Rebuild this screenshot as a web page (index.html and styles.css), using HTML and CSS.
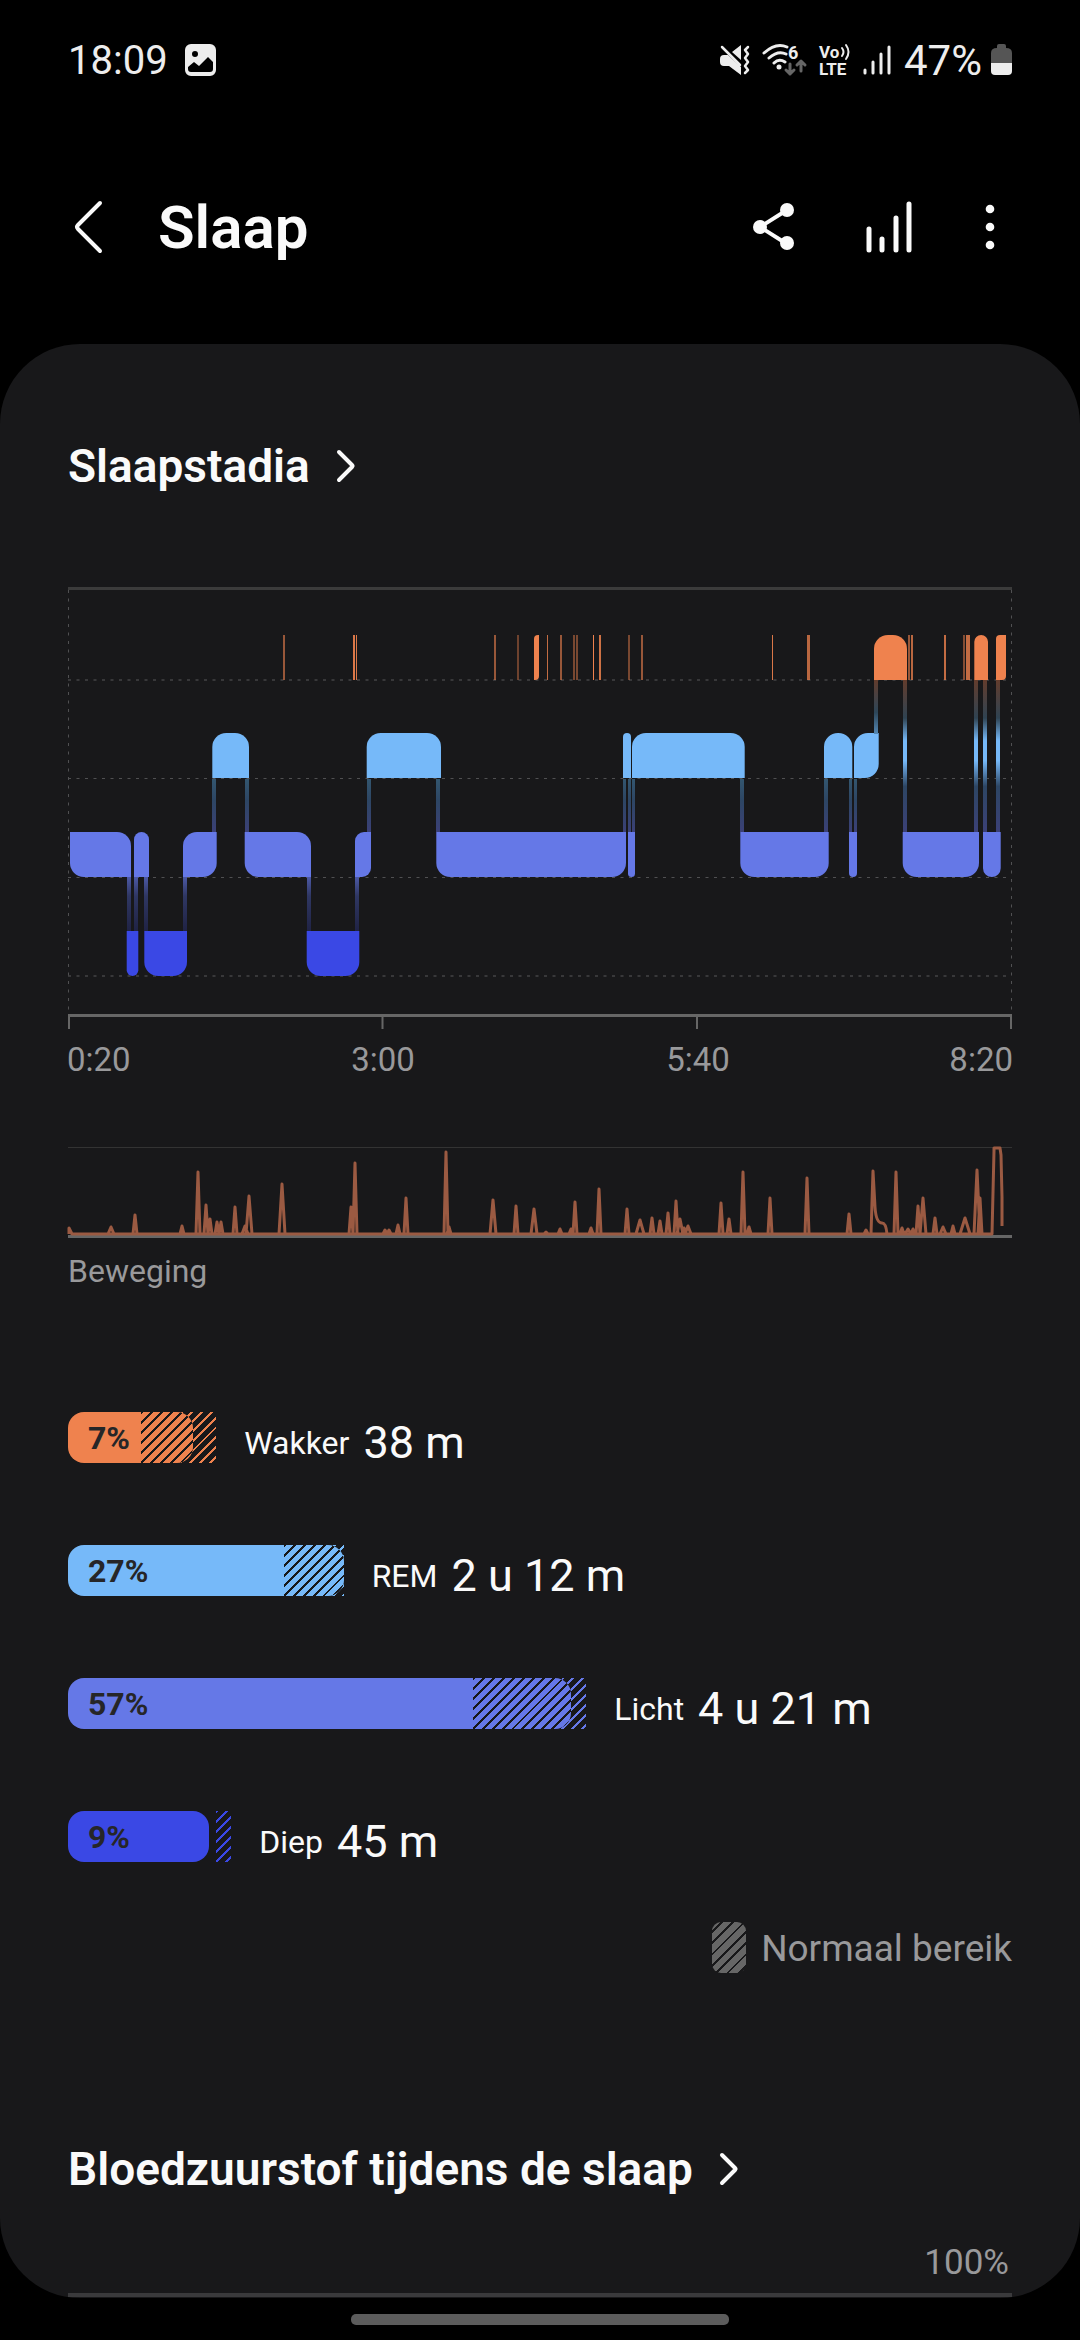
FILE: index.html
```html
<!DOCTYPE html>
<html lang="nl">
<head>
    <meta charset="UTF-8">
    <meta name="viewport" content="width=device-width, initial-scale=1.0">
    <title>Slaap</title>
    <link rel="stylesheet" href="styles.css">
</head>
<body>
    <div class="status-bar">
        <span class="status-time">18:09</span>
        <svg class="status-icon" width="31" height="32" viewBox="0 0 31 32">
            <path fill-rule="evenodd" d="M6 0h19a6 6 0 0 1 6 6v20a6 6 0 0 1-6 6H6a6 6 0 0 1-6-6V6a6 6 0 0 1 6-6zM3 23v2q0 3 3 3h19q3 0 3-3v-7l-5-5-9 9-5-4zM10 7a3 3 0 1 0 0 6 3 3 0 0 0 0-6z"/>
        </svg>
        <div class="status-right">
            <svg class="status-icon" width="30" height="30" viewBox="0 0 30 30">
                <path d="M0 14q0-4 4-4h4l13 12v8L9 21H4q-4 0-4-4zM12 7l9-7v15z"/>
                <path class="line" stroke-width="2.5" d="M2 2l18 18"/>
                <path class="line" stroke-width="2.5" d="M28 2l-3 3 3 4-3 4 3 4-3 4 3 4-3 3"/>
            </svg>
            <svg class="status-icon" width="45" height="34" viewBox="0 0 45 34">
                <path class="line" stroke-width="3" d="M2 10Q14-1 25 4M7 15q9-8 17-4M12 20q5-5 11-1"/>
                <circle cx="17" cy="24" r="2.5"/>
                <text class="wifi-text" x="26" y="16">6</text>
                <path class="line dim" stroke-width="3" d="M28 21v10M24 27l4 4 4-4M39 28V18M35 22l4-4 4 4"/>
            </svg>
            <svg class="status-icon" width="32" height="36" viewBox="0 0 32 36">
                <text class="lte-text" x="0" y="16">Vo</text>
                <path class="line" stroke-width="2" d="M23 6q3 4 0 8M27 3q5 7 0 14"/>
                <text class="lte-text" x="0" y="33">LTE</text>
            </svg>
            <svg class="status-icon signal" width="28" height="30" viewBox="0 0 28 30">
                <path class="line" stroke-width="3" d="M2 25v3M10 17v11M18 9v19M26 2v26"/>
            </svg>
            <span class="status-battery">47%</span>
            <svg class="status-icon" width="21" height="32" viewBox="0 0 21 32">
                <path class="dim-fill" d="M6 2q0-2 2-2h5q2 0 2 2v2q6 0 6 5v11H0V9q0-5 6-5z"/>
                <path d="M0 19h21v8q0 4-4 4H4q-4 0-4-4z"/>
            </svg>
        </div>
    </div>

    <header class="header">
        <button class="icon-btn back" aria-label="Terug">
            <svg width="34" height="54" viewBox="0 0 34 54"><path class="line" stroke-width="4" d="M32 3L10 25q-2 2 0 4l22 22"/></svg>
        </button>
        <h1 class="title">Slaap</h1>
        <button class="icon-btn" aria-label="Delen">
            <svg width="52" height="54" viewBox="0 0 52 54">
                <path class="line" stroke-width="4" d="M39 10L12 27l27 17"/>
                <circle cx="39" cy="10" r="7"/><circle cx="12" cy="27" r="7"/><circle cx="39" cy="43" r="7"/>
            </svg>
        </button>
        <button class="icon-btn" aria-label="Trends">
            <svg width="52" height="54" viewBox="0 0 52 54"><path class="line" stroke-width="5" d="M5 29v21M18 39v11M32 18v32M45 4v46"/></svg>
        </button>
        <button class="icon-btn" aria-label="Meer opties">
            <svg width="20" height="54" viewBox="0 0 20 54"><circle cx="10" cy="9" r="4.3"/><circle cx="10" cy="27" r="4.3"/><circle cx="10" cy="45" r="4.3"/></svg>
        </button>
    </header>

    <main class="card">
        <h2 class="section-title">
            <a href="#">Slaapstadia
                <svg width="20" height="34" viewBox="0 0 20 34"><path class="line" stroke-width="4" d="M3 3l13 13q1 1 0 2L3 31"/></svg>
            </a>
        </h2>

        <svg class="stage-chart" id="stageChart" viewBox="0 0 944 493">
            <defs>
                <linearGradient id="lightDeep" x1="0" y1="0" x2="0" y2="1">
                    <stop offset="0" stop-color="#4c59a6"/><stop offset="0.35" stop-color="#2f3763"/><stop offset="1" stop-color="#202345"/>
                </linearGradient>
                <linearGradient id="remLight" x1="0" y1="0" x2="0" y2="1">
                    <stop offset="0" stop-color="#33566f"/><stop offset="0.4" stop-color="#2d4664"/><stop offset="1" stop-color="#3b4077"/>
                </linearGradient>
                <linearGradient id="wakeRem" x1="0" y1="0" x2="0" y2="1">
                    <stop offset="0" stop-color="#633c2c"/><stop offset="0.6" stop-color="#2d4659"/><stop offset="1" stop-color="#5488b5"/>
                </linearGradient>
                <linearGradient id="wakeLight" x1="0" y1="0" x2="0" y2="1">
                    <stop offset="0" stop-color="#633c2c"/><stop offset="0.25" stop-color="#2f4352"/><stop offset="0.4" stop-color="#76b9f9"/>
                    <stop offset="0.53" stop-color="#76b9f9"/><stop offset="0.7" stop-color="#2d4664"/><stop offset="1" stop-color="#3b4077"/>
                </linearGradient>
            </defs>
            <rect class="chart-top" x="0" y="0" width="944" height="3"/>
            <path class="grid-row" d="M0 93h940M0 389h940"/>
            <path class="grid-line" d="M0 191.500h940M0 290.500h940M.5 3v424M943.500 3v424"/>
            <g id="stages"></g>
            <rect class="chart-axis" x="0" y="427" width="944" height="3"/>
            <path class="chart-tick" d="M1 430v12M314.500 430v12M629 430v12M943 430v12"/>
            <text class="chart-label" x="-1" y="484">0:20</text>
            <text class="chart-label middle" x="315" y="484">3:00</text>
            <text class="chart-label middle" x="630" y="484">5:40</text>
            <text class="chart-label end" x="945" y="484">8:20</text>
        </svg>

        <svg class="move-chart" viewBox="0 0 944 92">
            <rect class="move-top" x="0" y="0" width="944" height="1"/>
            <rect class="chart-axis" x="0" y="88" width="944" height="3"/>
            <path class="move-line" id="moveLine"/>
        </svg>
        <p class="move-label">Beweging</p>

        <ul class="stage-list">
            <li class="stage wake">
                <div class="track" style="width: 15.7%">
                    <div class="range" style="left: 49.3%"></div>
                    <div class="fill" style="width: 84.5%">7%<div class="hatch" style="left: 58.4%"></div></div>
                </div>
                <span class="stage-name">Wakker</span>
                <span class="stage-time">38 m</span>
            </li>
            <li class="stage rem">
                <div class="track" style="width: 29.2%">
                    <div class="range" style="left: 78.3%"></div>
                    <div class="fill" style="width: 100%">27%<div class="hatch" style="left: 78.3%"></div></div>
                </div>
                <span class="stage-name">REM</span>
                <span class="stage-time">2 u 12 m</span>
            </li>
            <li class="stage light">
                <div class="track" style="width: 54.9%">
                    <div class="range" style="left: 78.2%"></div>
                    <div class="fill" style="width: 97.1%">57%<div class="hatch" style="left: 80.5%"></div></div>
                </div>
                <span class="stage-name">Licht</span>
                <span class="stage-time">4 u 21 m</span>
            </li>
            <li class="stage deep">
                <div class="track" style="width: 17.3%">
                    <div class="range" style="left: 90.8%"></div>
                    <div class="fill" style="width: 86.5%">9%</div>
                </div>
                <span class="stage-name">Diep</span>
                <span class="stage-time">45 m</span>
            </li>
        </ul>

        <div class="legend">
            <span class="legend-swatch"></span>
            <span class="legend-text">Normaal bereik</span>
        </div>

        <h2 class="section-title oxygen-title">
            <a href="#">Bloedzuurstof tijdens de slaap
                <svg width="20" height="34" viewBox="0 0 20 34"><path class="line" stroke-width="4" d="M3 3l13 13q1 1 0 2L3 31"/></svg>
            </a>
        </h2>
        <div class="oxygen-top">100%</div>
    </main>
    <div class="nav-handle"></div>

    <script src="chart.js"></script>
</body>
</html>
```
FILE: chart.js
```js
const colors = { wake: '#ef824e', rem: '#76b9f9', light: '#6578e7', deep: '#3a48e5' };
const rows = { wake: 48, rem: 146, light: 245, deep: 344 };

// connecting lines: x, y, width, height, gradient
const links = [];
[59, 66, 76, 115, 239, 287].forEach(x => links.push([x, 290, 4, 54, 'lightDeep']));
[144, 177, 299, 368, 672, 756].forEach(x => links.push([x, 192, 4, 53, 'remLight']));
[555, 560, 564, 781, 786].forEach(x => links.push([x, 192, 3, 53, 'remLight']));
links.push([806, 93, 4, 54, 'wakeRem']);
[835, 906, 915, 928].forEach(x => links.push([x, 93, 4, 152, 'wakeLight']));

// stage, start, end, rounded corners (tl tr br bl)
const stages = [
    ['light', 2, 63, '0101'], ['light', 66, 81, '1100'], ['deep', 58.7, 70.3, '0011'],
    ['deep', 76.3, 119, '0011'], ['light', 115, 148.7, '1010'], ['rem', 144.3, 181, '1100'],
    ['light', 176.7, 243, '0101'], ['deep', 238.7, 291.3, '0011'], ['light', 287, 303, '1010'],
    ['rem', 298.7, 373, '1100'], ['light', 368.3, 558, '0011'], ['rem', 555, 563, '1100'],
    ['light', 560, 567, '0011'], ['rem', 564, 676.7, '1100'], ['light', 672.3, 760.7, '0011'],
    ['rem', 756, 784.3, '1100'], ['light', 781, 789, '0011'], ['rem', 786, 810.7, '1010'],
    ['wake', 806, 839, '1100'], ['light', 834.7, 911, '0011'], ['wake', 906.3, 920, '1100'],
    ['light', 915, 932.7, '0011'], ['wake', 928, 938, '1010'], ['wake', 466, 471, '1010']
];

// short wake moments: x, width, opacity
const wakes = [
    [215, 2, 0.6], [285, 2, 0.9], [288, 1, 0.9], [426, 2, 0.6], [449, 2, 0.4], [479, 1, 0.8],
    [492, 2, 0.6], [505, 2, 0.45], [508, 2, 0.45], [525, 1, 1], [531, 2, 0.85], [560, 2, 0.45],
    [573, 2, 0.6], [704, 1, 0.9], [739, 3, 0.75], [840, 2, 0.6], [843, 2, 0.75], [876, 2, 0.8],
    [895, 2, 0.5], [898, 4, 0.8]
];

function barPath(x1, y, x2, corners) {
    const h = 45;
    const both = corners === '1100' || corners === '0011';
    const r = Math.min(14, both ? (x2 - x1) / 2 : Math.max(x2 - x1 - 7, 4));
    const [a, b, c, d] = corners.split('').map(v => v === '1' ? r : 0);
    return `M${x1 + a} ${y}H${x2 - b}a${b} ${b} 0 0 1 ${b} ${b}V${y + h - c}a${c} ${c} 0 0 1 ${-c} ${c}H${x1 + d}a${d} ${d} 0 0 1 ${-d} ${-d}V${y + a}a${a} ${a} 0 0 1 ${a} ${-a}z`;
}

let html = '';
stages.forEach(([stage, x1, x2, corners]) => {
    html += `<path fill="${colors[stage]}" d="${barPath(x1, rows[stage], x2, corners)}"/>`;
});
wakes.forEach(([x, w, o]) => {
    html += `<rect fill="${colors.wake}" opacity="${o}" x="${x}" y="48" width="${w}" height="45"/>`;
});
links.forEach(([x, y, w, h, id]) => {
    html += `<rect fill="url(#${id})" x="${x}" y="${y}" width="${w}" height="${h}"/>`;
});
document.getElementById('stages').innerHTML = html;

// movement peaks: x, top, half width
const peaks = [
    [43, 79, 3], [67, 67, 2], [114, 78, 2], [130, 24, 2], [138, 57, 2], [142, 71, 2], [149, 74, 2], [153, 74, 2],
    [163, 86, 2], [167, 59, 2], [177, 78, 3], [181, 48, 3], [214, 36, 3], [238, 86, 2], [277, 86, 2], [283, 59, 2],
    [287, 15, 2], [311, 86, 2], [317, 82, 2], [321, 82, 2], [330, 77, 2], [338, 50, 2], [378, 4, 2], [381, 79, 2],
    [425, 52, 3], [434, 86, 2], [448, 58, 2], [466, 61, 3], [478, 84, 2], [492, 81, 2], [503, 81, 2], [507, 54, 2],
    [523, 80, 2], [531, 41, 2], [559, 61, 2], [572, 72, 4], [584, 70, 2], [592, 73, 2], [600, 65, 2],
    [608, 53, 2], [612, 71, 3], [616, 80, 2], [620, 78, 3], [653, 55, 2], [661, 71, 2], [675, 24, 2], [681, 79, 2],
    [702, 50, 2], [739, 30, 2], [781, 66, 2], [798, 82, 2], [828, 24, 2], [834, 80, 2], [840, 81, 3], [845, 81, 2],
    [850, 58, 2], [855, 50, 3], [867, 70, 2], [875, 79, 3], [885, 78, 2], [897, 70, 5], [909, 22, 3], [912, 50, 2]
];
let d = 'M1 87V81L4 87H911';
peaks.forEach(([x, top, w]) => {
    d += `M${x - w} 87L${x} ${top + 1}L${x + w} 87`;
});
d += 'M803 87L805 24L807 60Q808 76 814 76Q818 76 819 87';
d += 'M911 87H924L926 4V1H932L933 8L934 50V79';
document.getElementById('moveLine').setAttribute('d', d);
```
FILE: styles.css
```css
* {
    box-sizing: border-box;
}
body {
    margin: 0;
    background: #000;
    color: #fafafa;
    font-family: Roboto, "Liberation Sans", sans-serif;
}
svg {
    display: block;
    fill: currentColor;
    overflow: visible;
}
.line {
    fill: none;
    stroke: currentColor;
    stroke-linecap: round;
    stroke-linejoin: round;
}
.status-bar {
    display: flex;
    align-items: center;
    height: 120px;
    padding: 0 68px;
    color: #ededed;
    font-size: 40px;
}
.status-time {
    margin-right: 17px;
}
.status-right {
    display: flex;
    align-items: center;
    gap: 12px;
    margin-left: auto;
}
.status-battery {
    font-size: 42px;
    margin: 0 -3px 0 1px;
}
.dim {
    color: #666;
}
.dim-fill {
    fill: #555;
}
.wifi-text {
    font-size: 18px;
    font-weight: bold;
}
.lte-text {
    font-size: 17px;
    font-weight: bold;
}
.header {
    display: flex;
    align-items: center;
    gap: 64px;
    height: 214px;
    padding: 0 80px 0 68px;
    margin-bottom: 10px;
}
.icon-btn {
    padding: 0;
    border: none;
    background: none;
    color: #fafafa;
    cursor: pointer;
}
.back {
    margin-right: -8px;
}
.title {
    flex: 1;
    margin: 0;
    font-size: 60px;
    font-weight: 600;
}
.card {
    padding: 96px 68px 1px;
    border-radius: 80px;
    background: #18181a;
    overflow: hidden;
}
.section-title {
    margin: 0;
    font-size: 46px;
    line-height: 52px;
    font-weight: 600;
}
.section-title a {
    display: inline-flex;
    align-items: center;
    gap: 26px;
    color: inherit;
    text-decoration: none;
}
.stage-chart {
    width: 100%;
    margin-top: 95px;
}
.chart-top {
    fill: #3b3b3b;
}
.grid-row {
    stroke: #38383a;
    stroke-width: 2;
    stroke-dasharray: 3 5.5;
}
.grid-line {
    stroke: #505052;
    stroke-width: 1;
    stroke-dasharray: 3 5.5;
}
.chart-axis {
    fill: #666;
}
.chart-tick {
    stroke: #666;
    stroke-width: 2;
}
.chart-label {
    fill: #99999b;
    font-size: 33px;
}
.middle {
    text-anchor: middle;
}
.end {
    text-anchor: end;
}
.move-chart {
    width: 100%;
    margin-top: 67px;
}
.move-top {
    fill: #333;
}
.move-line {
    fill: none;
    stroke: #9b5a42;
    stroke-width: 3;
    stroke-linejoin: round;
}
.move-label {
    margin: 12px 0 0;
    color: #99999b;
    font-size: 32px;
    line-height: 40px;
}
.stage-list {
    display: flex;
    flex-direction: column;
    gap: 82px;
    margin: 121px 0 0;
    padding: 0;
    list-style: none;
}
.stage {
    display: flex;
    align-items: center;
    height: 51px;
}
.wake {
    color: #ef824e;
}
.rem {
    color: #76b9f9;
}
.light {
    color: #6578e7;
}
.deep {
    color: #3a48e5;
}
.track {
    position: relative;
    height: 51px;
}
.range {
    position: absolute;
    top: 0;
    right: 0;
    bottom: 0;
    background: repeating-linear-gradient(135deg, currentColor 0 2px, transparent 2px 7px);
}
.fill {
    position: relative;
    height: 100%;
    padding-left: 20px;
    border-radius: 16px;
    background: currentColor;
    overflow: hidden;
    line-height: 53px;
    font-size: 32px;
    font-weight: bold;
}
.fill::first-line {
    color: #262628;
}
.hatch {
    position: absolute;
    top: 0;
    right: 0;
    bottom: 0;
    background: repeating-linear-gradient(135deg, #18181a 0 2px, transparent 2px 7px);
}
.stage-name {
    margin-left: 28px;
    padding-top: 10px;
    color: #fafafa;
    font-size: 32px;
}
.stage-time {
    margin-left: 14px;
    padding-top: 9px;
    color: #fafafa;
    font-size: 45px;
}
.legend {
    display: flex;
    align-items: center;
    justify-content: flex-end;
    gap: 15px;
    margin-top: 60px;
    color: #99999b;
    font-size: 37px;
    line-height: 48px;
}
.legend-text {
    padding-top: 3px;
}
.legend-swatch {
    width: 34px;
    height: 51px;
    border-radius: 9px;
    background: repeating-linear-gradient(135deg, #666 0 6px, #18181a 6px 8px);
}
.oxygen-title {
    margin-top: 170px;
}
.oxygen-top {
    margin-top: 48px;
    padding: 0 3px 10px 0;
    border-bottom: 4px solid #3a3a3c;
    color: #99999b;
    font-size: 35px;
    line-height: 40px;
    text-align: right;
}
.nav-handle {
    width: 35%;
    height: 11px;
    margin: 16px auto 0;
    border-radius: 5px;
    background: #5c5c5c;
}
```
